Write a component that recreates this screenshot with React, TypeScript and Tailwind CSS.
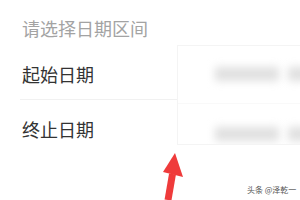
export default function App() {
  const font = { fontFamily: '"Noto Sans CJK SC", "Noto Sans", sans-serif' };
  return (
    <div className="relative w-[300px] h-[200px] overflow-hidden bg-white" style={font}>
      {/* Title */}
      <div className="pl-[22px] pt-[16px] h-[45px] text-[18px] leading-[24px] text-[#a3a3a3]">
        请选择日期区间
      </div>

      <div className="flex">
        {/* Left column */}
        <div className="w-[177px] shrink-0 pl-[20px]">
          <div className="h-[55px] pl-[2px] pt-[17px] text-[18px] leading-[24px] text-[#333333] border-b border-[#f1f1f1]">
            起始日期
          </div>
          <div className="h-[55px] pl-[2px] pt-[17px] text-[18px] leading-[24px] text-[#333333]">
            终止日期
          </div>
        </div>

        {/* Right panel (blurred) */}
        <div className="flex-1 min-w-0 h-[100px] border-l border-t border-b border-[#f4f4f4] flex flex-col overflow-hidden">
          <div className="h-[58px] flex gap-[9px] pl-[37px] pt-[21px] border-b border-[#f9f9f9]">
            <div className="w-[64px] h-[14px] shrink-0 bg-[#e0e0e0] blur-[4px]" />
            <div className="w-[32px] h-[14px] shrink-0 bg-[#e0e0e0] blur-[4px]" />
          </div>
          <div className="flex gap-[9px] pl-[37px] pt-[23px]">
            <div className="w-[64px] h-[14px] shrink-0 bg-[#e0e0e0] blur-[4px]" />
            <div className="w-[32px] h-[14px] shrink-0 bg-[#e0e0e0] blur-[4px]" />
          </div>
        </div>
      </div>

      {/* Red arrow */}
      <svg className="absolute left-0 top-0" width="300" height="200" viewBox="0 0 300 200">
        <path d="M168 200 L172.5 174" stroke="#ef3b3b" strokeWidth="7" strokeLinecap="butt" fill="none" />
        <path d="M175 153 L163 172 L183 177 Z" fill="#ef3b3b" />
      </svg>

      {/* Watermark */}
      <div className="absolute left-[247px] top-[185px] text-[8px] leading-[10px] text-[#555555] whitespace-nowrap">
        头条 @泽乾一
      </div>
    </div>
  );
}
